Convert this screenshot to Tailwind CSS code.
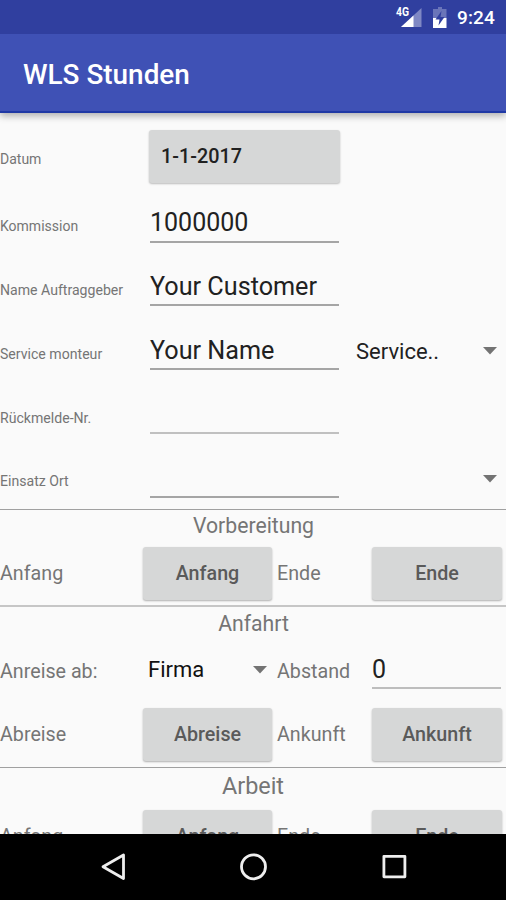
<!DOCTYPE html>
<html lang="de">
<head>
<meta charset="utf-8">
<title>WLS Stunden</title>
<script src="https://cdn.jsdelivr.net/npm/@tailwindcss/browser@4"></script>
</head>
<body class="w-[506px] h-[900px] overflow-hidden bg-[#fafafa] font-[Roboto,sans-serif] whitespace-nowrap">
<div class="w-full h-full flex flex-col">
  <header class="relative z-10 shrink-0 shadow-[0_3px_7px_rgba(0,0,0,0.3)]">
    <div class="h-[34px] bg-[#303f9f] flex items-center justify-end pr-[10px] text-white">
      <svg class="w-[62px] h-[34px]" viewBox="0 0 62 34" fill="none">
        <path d="M29.500 8V27H9Z" fill="#7f88c4"/>
        <path d="M9 27L21.500 15.500V27Z" fill="#fff"/>
        <path d="M3 6H17.500V17H3Z" fill="#303f9f"/>
        <text x="4" y="16" font-family="Roboto, sans-serif" font-size="12" font-weight="700" fill="#fff" textLength="13" lengthAdjust="spacingAndGlyphs">4G</text>
        <path d="M43 9H46V7H50V9H54.500V18H41V9Z" fill="#6a75b9"/>
        <path d="M41 18H54.500V28H41Z" fill="#fff"/>
        <path d="M49.500 11L43.500 19.500H47.500L46.500 25.500L52.500 17H48.500Z" fill="#303f9f"/>
      </svg>
      <span class="ml-[3px] w-[39px] text-[19px] font-medium leading-[34px] pt-[2px] tracking-[0.1px]">9:24</span>
    </div>
    <div class="h-[79px] bg-[#3f51b5] border-b-2 border-[#2039a5] flex items-center pl-[23px] pt-[5px]">
      <h1 class="text-[27.900px] font-medium text-white">WLS Stunden</h1>
    </div>
  </header>

  <main class="h-[721px] shrink-0 overflow-hidden text-[#757575] text-[19.700px]">
    <div class="h-[81px] flex pt-[17px]">
      <div class="w-[149px] text-[14px] leading-[59px]">Datum</div>
      <button class="w-[191px] h-[53px] rounded-[3px] bg-[#d6d7d7] shadow-[0_1px_2px_rgba(0,0,0,0.25)] text-left pl-[12px] text-[19.800px] leading-[54px] font-medium text-[#212121]">1-1-2017</button>
    </div>
    <div class="h-[64px] flex">
      <div class="w-[150px] text-[14px] leading-[65px]">Kommission</div>
      <div class="w-[189px] h-[49px] border-b-2 border-[#a5a5a5] text-[25px] leading-[57px] text-[#212121]">1000000</div>
    </div>
    <div class="h-[64px] flex">
      <div class="w-[150px] text-[14.100px] leading-[65px]">Name Auftraggeber</div>
      <div class="w-[189px] h-[48px] border-b-2 border-[#a5a5a5] text-[25.200px] leading-[57px] text-[#212121]">Your Customer</div>
    </div>
    <div class="h-[64px] flex">
      <div class="w-[150px] text-[14.100px] leading-[65px]">Service monteur</div>
      <div class="w-[189px] h-[48px] border-b-2 border-[#a5a5a5] text-[25.200px] leading-[57px] text-[#212121]">Your Name</div>
      <div class="ml-[17px] w-[127px] text-[22px] leading-[59px] text-[#212121]">Service..</div>
      <svg class="mt-[25px] w-[14px] h-[8px]" viewBox="0 0 14 8"><path d="M0 0H14L7 7.500Z" fill="#737373"/></svg>
    </div>
    <div class="h-[64px] flex">
      <div class="w-[150px] text-[14.100px] leading-[64px]">Rückmelde-Nr.</div>
      <div class="w-[189px] h-[48px] border-b-2 border-[#c0c0c0]"></div>
    </div>
    <div class="h-[59px] flex">
      <div class="w-[150px] text-[14.100px] leading-[63px]">Einsatz Ort</div>
      <div class="w-[189px] h-[48px] border-b-2 border-[#a5a5a5]"></div>
      <svg class="ml-[144px] mt-[25px] w-[14px] h-[8px]" viewBox="0 0 14 8"><path d="M0 0H14L7 7.500Z" fill="#737373"/></svg>
    </div>

    <section class="h-[96px] border-t border-[#a0a0a0]">
      <h2 class="h-[37px] text-center text-[21.200px] leading-[31px] pl-px">Vorbereitung</h2>
      <div class="flex leading-[53px]">
        <div class="w-[143px]">Anfang</div>
        <button class="w-[129px] h-[53px] rounded-[3px] bg-[#d6d7d7] shadow-[0_1px_2px_rgba(0,0,0,0.3)] font-medium text-[#5a5a5a]">Anfang</button>
        <div class="ml-[5px] w-[95px]">Ende</div>
        <button class="w-[130px] h-[53px] rounded-[3px] bg-[#d6d7d7] shadow-[0_1px_2px_rgba(0,0,0,0.3)] font-medium text-[#5a5a5a]">Ende</button>
      </div>
    </section>

    <section class="h-[162px] border-t-2 border-[#c6c6c6]">
      <h2 class="h-[35px] text-center text-[21.200px] leading-[33px] pl-px">Anfahrt</h2>
      <div class="h-[66px] flex leading-[59px]">
        <div class="w-[148px]">Anreise ab:</div>
        <div class="w-[105px] text-[22px] leading-[56px] text-[#111]">Firma</div>
        <svg class="mt-[24px] w-[14px] h-[8px]" viewBox="0 0 14 8"><path d="M0 0H14L7 7.500Z" fill="#737373"/></svg>
        <div class="ml-[10px] w-[95px]">Abstand</div>
        <div class="w-[129px] h-[47px] border-b-2 border-[#bdbdbd] text-[25px] leading-[55px] text-[#212121]">0</div>
      </div>
      <div class="flex leading-[54px]">
        <div class="w-[143px]">Abreise</div>
        <button class="w-[129px] h-[53px] rounded-[3px] bg-[#d6d7d7] shadow-[0_1px_2px_rgba(0,0,0,0.3)] font-medium text-[#5a5a5a]">Abreise</button>
        <div class="ml-[5px] w-[95px]">Ankunft</div>
        <button class="w-[130px] h-[53px] rounded-[3px] bg-[#d6d7d7] shadow-[0_1px_2px_rgba(0,0,0,0.3)] font-medium text-[#5a5a5a]">Ankunft</button>
      </div>
    </section>

    <section class="border-t border-[#a0a0a0]">
      <h2 class="h-[42px] text-center text-[23.400px] leading-[37px]">Arbeit</h2>
      <div class="flex leading-[53px]">
        <div class="w-[143px]">Anfang</div>
        <button class="w-[129px] h-[53px] rounded-[3px] bg-[#d6d7d7] shadow-[0_1px_2px_rgba(0,0,0,0.3)] font-medium text-[#5a5a5a]">Anfang</button>
        <div class="ml-[5px] w-[95px]">Ende</div>
        <button class="w-[130px] h-[53px] rounded-[3px] bg-[#d6d7d7] shadow-[0_1px_2px_rgba(0,0,0,0.3)] font-medium text-[#5a5a5a]">Ende</button>
      </div>
    </section>
  </main>

  <nav class="h-[66px] shrink-0 bg-black flex items-center pl-[101px]">
    <svg class="w-[26px] h-[28px]" viewBox="0 0 26 28" fill="none" stroke="#eee" stroke-width="2.800" stroke-linejoin="round"><path d="M22.500 2V25.500L2 13.700Z"/></svg>
    <svg class="ml-[112px] w-[28px] h-[28px]" viewBox="0 0 28 28" fill="none" stroke="#eee" stroke-width="2.800"><circle cx="14.500" cy="13.800" r="12"/></svg>
    <svg class="ml-[114px] w-[28px] h-[28px]" viewBox="0 0 28 28" fill="none" stroke="#eee" stroke-width="2.800" stroke-linejoin="round"><path d="M2.900 3.300H23.900V23.800H2.900Z"/></svg>
  </nav>
</div>
</body>
</html>
